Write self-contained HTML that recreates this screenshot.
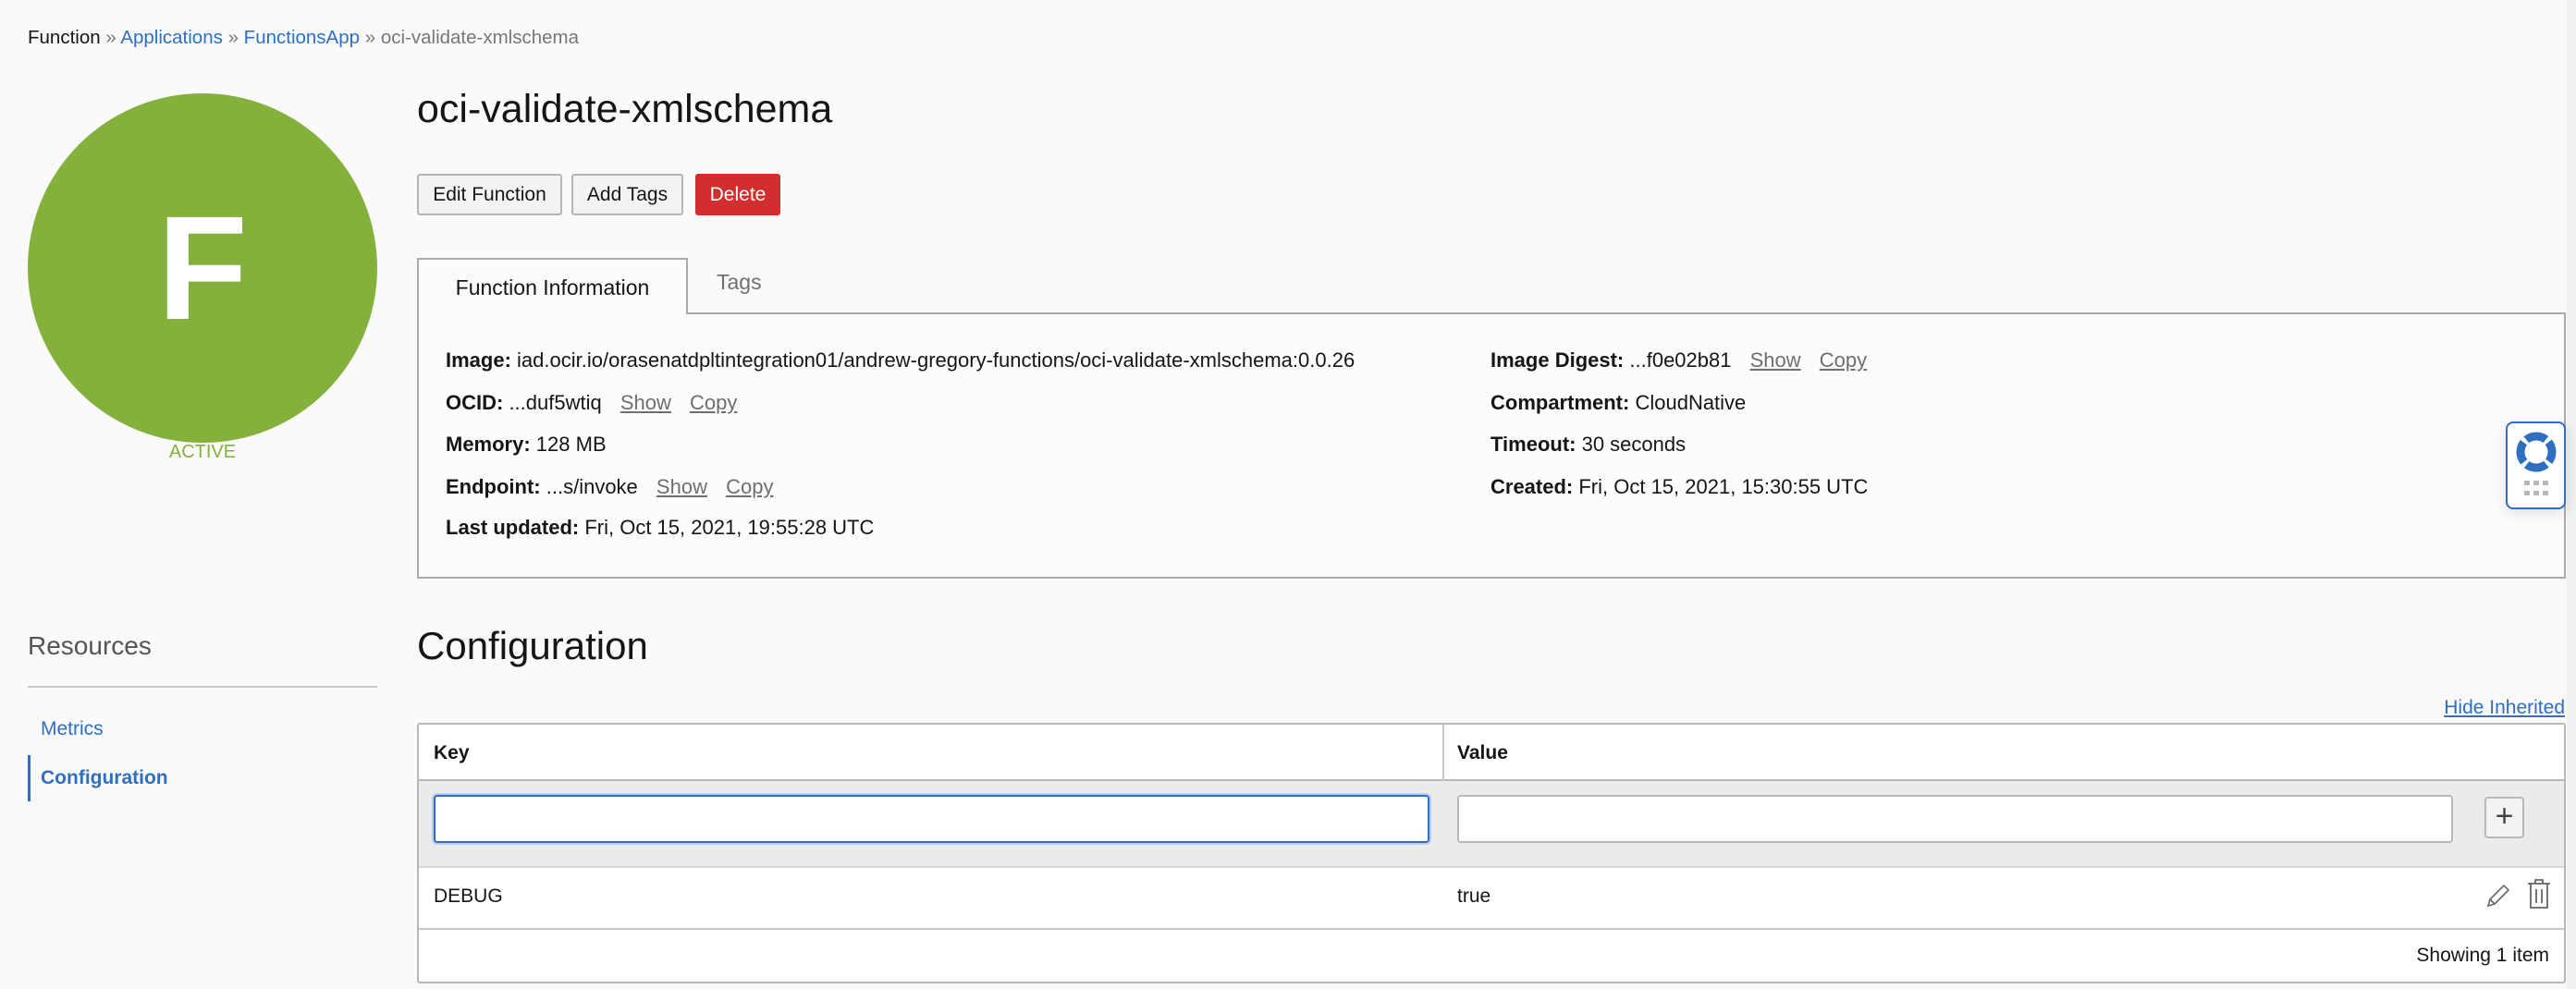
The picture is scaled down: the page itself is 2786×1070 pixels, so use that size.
<!DOCTYPE html>
<html><head><meta charset="utf-8"><style>
*{box-sizing:border-box;margin:0;padding:0}
body{width:2786px;height:1070px;overflow:hidden;background:#fafafa;font-family:"Liberation Sans",Arial,sans-serif;color:#161513;position:relative;font-size:22px}
.a{position:absolute;white-space:nowrap}
.lnk{color:#2e6fc2}
.btn{position:absolute;top:188px;height:45px;border:2px solid #b5b5b5;border-radius:3px;background:#f3f3f3;font-size:21px;line-height:41px;text-align:center;color:#161513}
.row{position:absolute;font-size:22px;line-height:24px}
.row b{font-weight:bold}
.u{color:#6f6f6f;text-decoration:underline;margin-left:14px}
</style></head><body>
<div style="position:absolute;left:2776px;top:0;width:10px;height:1070px;background:#f0f0f0"></div>
<div class="a" style="left:30px;top:29px;font-size:20.5px;color:#161513">Function <span style="color:#777">»</span> <span class="lnk">Applications</span> <span style="color:#777">»</span> <span class="lnk">FunctionsApp</span> <span style="color:#777">» oci-validate-xmlschema</span></div>
<div style="position:absolute;left:30px;top:101px;width:378px;height:378px;border-radius:50%;background:#84b03c;color:#fff;font-weight:bold;font-size:160px;text-align:center;line-height:378px">F</div>
<div class="a" style="left:0;width:438px;text-align:center;top:478px;color:#84b03c;font-size:20px">ACTIVE</div>
<div class="a" style="left:451px;top:94px;font-size:43px;color:#161513">oci-validate-xmlschema</div>
<div class="btn" style="left:451px;width:157px">Edit Function</div>
<div class="btn" style="left:618px;width:121px">Add Tags</div>
<div class="btn" style="left:752px;width:92px;background:#d32e2e;border-color:#d32e2e;color:#fff">Delete</div>
<div style="position:absolute;left:451px;top:279px;width:293px;height:61px;border:2px solid #aaa;border-bottom:none;background:#fcfcfc;font-size:23px;text-align:center;line-height:60px;z-index:2">Function Information</div>
<div class="a" style="left:775px;top:292px;font-size:23px;color:#6f6f6f">Tags</div>
<div style="position:absolute;left:451px;top:338px;width:2324px;height:288px;border:2px solid #aaa;background:#fcfcfc"></div>
<div class="row" style="left:482px;top:378px"><b>Image:</b> iad.ocir.io/orasenatdpltintegration01/andrew-gregory-functions/oci-validate-xmlschema:0.0.26</div>
<div class="row" style="left:482px;top:424px"><b>OCID:</b> ...duf5wtiq <span class="u">Show</span> <span class="u">Copy</span></div>
<div class="row" style="left:482px;top:469px"><b>Memory:</b> 128 MB</div>
<div class="row" style="left:482px;top:515px"><b>Endpoint:</b> ...s/invoke <span class="u">Show</span> <span class="u">Copy</span></div>
<div class="row" style="left:482px;top:559px"><b>Last updated:</b> Fri, Oct 15, 2021, 19:55:28 UTC</div>
<div class="row" style="left:1612px;top:378px"><b>Image Digest:</b> ...f0e02b81 <span class="u">Show</span> <span class="u">Copy</span></div>
<div class="row" style="left:1612px;top:424px"><b>Compartment:</b> CloudNative</div>
<div class="row" style="left:1612px;top:469px"><b>Timeout:</b> 30 seconds</div>
<div class="row" style="left:1612px;top:515px"><b>Created:</b> Fri, Oct 15, 2021, 15:30:55 UTC</div>
<div style="position:absolute;left:2710px;top:456px;width:65px;height:95px;border:2px solid #2e6fc2;border-radius:8px;background:#fff;box-shadow:0 4px 14px rgba(0,0,0,.12)">
<svg width="61" height="91" viewBox="0 0 61 91"><circle cx="31" cy="31" r="17" fill="none" stroke="#2e6fc2" stroke-width="9"/><circle cx="31" cy="31" r="17" fill="none" stroke="#fff" stroke-width="9" stroke-dasharray="4 22.7" stroke-dashoffset="-11"/>
<g fill="#b5b8bd"><rect x="18" y="62" width="6" height="5"/><rect x="28" y="62" width="6" height="5"/><rect x="38" y="62" width="6" height="5"/><rect x="18" y="73" width="6" height="5"/><rect x="28" y="73" width="6" height="5"/><rect x="38" y="73" width="6" height="5"/></g></svg></div>
<div class="a" style="left:30px;top:683px;font-size:28px;color:#555">Resources</div>
<div style="position:absolute;left:30px;top:742px;width:378px;height:2px;background:#c8c8c8"></div>
<div class="a lnk" style="left:44px;top:777px;font-size:21px">Metrics</div>
<div style="position:absolute;left:30px;top:817px;width:3px;height:50px;background:#2e6fc2"></div>
<div class="a lnk" style="left:44px;top:830px;font-size:21px;font-weight:bold">Configuration</div>
<div class="a" style="left:451px;top:675px;font-size:42px">Configuration</div>
<div class="a lnk" style="right:12px;top:754px;font-size:21px;text-decoration:underline">Hide Inherited</div>
<div style="position:absolute;left:451px;top:782px;width:2324px;height:282px;border:2px solid #b5b8bd;border-radius:3px;background:#fff;overflow:hidden">
 <div style="position:absolute;left:0;top:0;width:100%;height:61px;border-bottom:2px solid #b5b8bd"></div>
 <div style="position:absolute;left:1107px;top:0;width:2px;height:61px;background:#c8c8c8"></div>
 <div class="a" style="left:16px;top:19px;font-weight:bold;font-size:21px">Key</div>
 <div class="a" style="left:1123px;top:19px;font-weight:bold;font-size:21px">Value</div>
 <div style="position:absolute;left:0;top:61px;width:100%;height:94px;background:#ebebeb;border-bottom:2px solid #d5d5d5"></div>
 <div style="position:absolute;left:16px;top:76px;width:1077px;height:52px;border:2px solid #2e6fc2;border-radius:4px;background:#fff;box-shadow:0 0 0 2px #b9d0ee"></div>
 <div style="position:absolute;left:1123px;top:76px;width:1077px;height:52px;border:2px solid #b5b8bd;border-radius:4px;background:#fff"></div>
 <div style="position:absolute;left:2234px;top:78px;width:43px;height:45px;border:2px solid #b5b8bd;border-radius:4px;background:#f3f3f3;text-align:center;line-height:38px;font-size:34px;color:#444">+</div>
 <div class="a" style="left:16px;top:174px;font-size:21px">DEBUG</div>
 <div class="a" style="left:1123px;top:174px;font-size:21px">true</div>
 <svg style="position:absolute;left:2234px;top:170px" width="30" height="30" viewBox="0 0 30 30"><path d="M4 26 L6 19 L21 4 L26 9 L11 24 Z M6 19 L11 24" fill="none" stroke="#666" stroke-width="1.6"/></svg>
 <svg style="position:absolute;left:2278px;top:166px" width="30" height="34" viewBox="0 0 30 34"><path d="M3 6 H27 M11 6 V2 H19 V6 M6 6 V32 H24 V6 M12 12 V27 M18 12 V27" fill="none" stroke="#666" stroke-width="1.8"/></svg>
 <div style="position:absolute;left:0;top:220px;width:100%;height:2px;background:#c8c8c8"></div>
 <div class="a" style="right:16px;top:238px;font-size:21px">Showing 1 item</div>
</div>
</body></html>
